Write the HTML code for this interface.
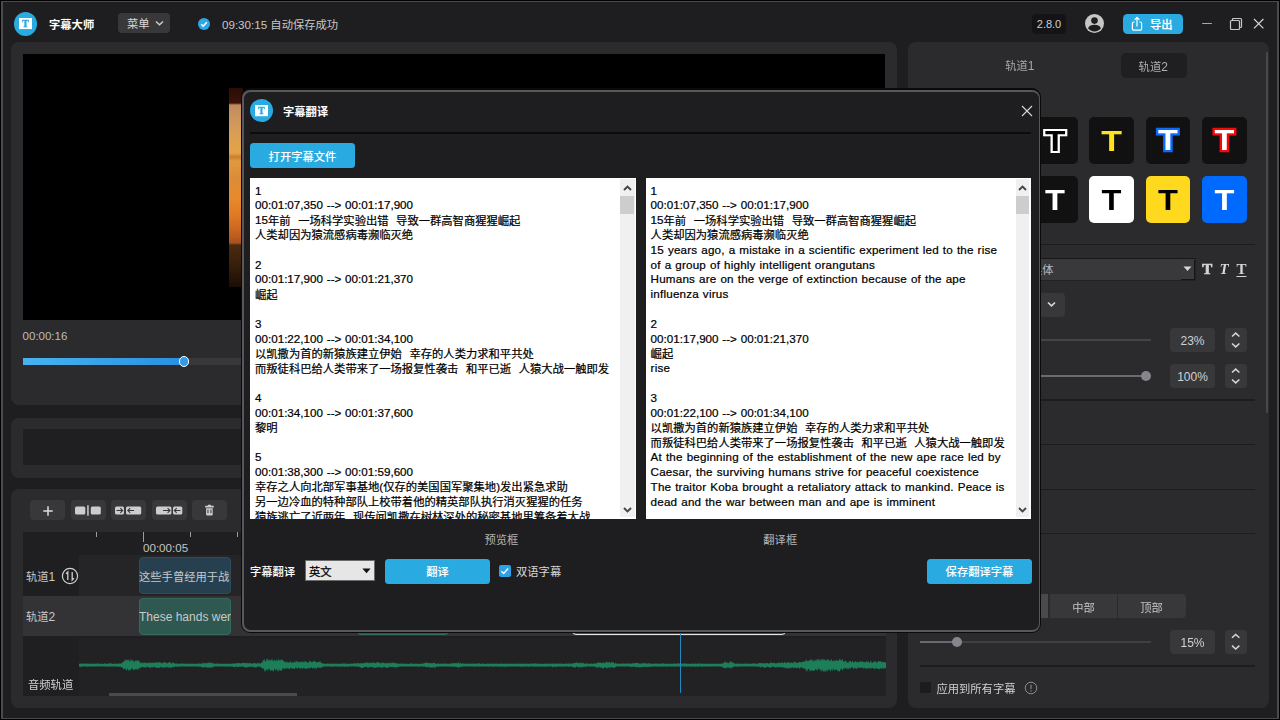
<!DOCTYPE html>
<html lang="zh-CN">
<head>
<meta charset="utf-8">
<title>字幕大师</title>
<style>
*{box-sizing:border-box;margin:0;padding:0}
html,body{width:1280px;height:720px;overflow:hidden;background:#1e1e20}
body{position:relative;font-family:"Liberation Sans","Noto Sans CJK SC",sans-serif;font-size:12px;color:#d0d0d0}
.abs{position:absolute}
#frame{position:absolute;left:0;top:0;width:1280px;height:720px;border:1px solid #000;z-index:50;pointer-events:none}
.fr{background:#4b4b4b;z-index:51}
.panel{position:absolute;background:#2b2b2e;border-radius:8px}
.logo{position:absolute;border-radius:50%;background:#29abe2}
.btn{position:absolute;background:#29abe2;color:#fff;border-radius:3.5px;text-align:center;font-weight:500;font-size:12px}
.tbtn{position:absolute;top:500.2px;height:20px;width:35px;background:#38383b;border-radius:4px}
.txt{position:absolute;white-space:nowrap;margin-top:1px}
.val{position:absolute;width:45px;height:24px;background:#38383b;border-radius:4px;text-align:center;line-height:26.6px;font-size:12px;color:#d0d0d0}
.step{position:absolute;width:22px;height:24px;background:#38383b;border-radius:4px}
.sep{position:absolute;height:1.6px;background:#1d1d1f;margin-top:-.4px}
.tile{position:absolute;width:44.6px;height:46.9px;border-radius:5px;background:#111}
.box{position:absolute;background:#fff;top:178px;height:341px;overflow:hidden;color:#000;font-size:11.65px;line-height:14.82px;white-space:pre;word-spacing:.55px;padding:5.5px 0 0 5px;-webkit-text-stroke:.22px #000}
.sb{position:absolute;top:1.1px;right:1.5px;width:14.2px;bottom:1.6px;background:#f0f0f0}
.c{font-size:11.3px}
.e{letter-spacing:.19px}
.box .c{position:relative;top:.5px}
.thumb{position:absolute;left:0;top:16.9px;width:13.8px;height:17.6px;background:#cdcdcd}
</style>
</head>
<body>
<div id="frame"></div>
<div class="abs fr" style="left:1px;top:1px;width:2px;height:718px"></div>
<div class="abs fr" style="left:1277px;top:1px;width:2px;height:718px"></div>
<div class="abs fr" style="left:1px;top:1px;width:1278px;height:1.3px"></div>
<div class="abs fr" style="left:1px;top:717.6px;width:1278px;height:1.5px"></div>

<!-- ===== Title bar ===== -->
<div class="logo" style="left:13.9px;top:11.6px;width:23.2px;height:24.2px"></div>
<svg class="abs" style="left:18.9px;top:17.1px;will-change:transform" width="13.1" height="13" viewBox="0 0 13.1 13"><rect x="0" y="1" width="13.1" height="11.1" fill="#fff"/><text x="6.55" y="9.9" text-anchor="middle" font-family="'Liberation Serif',serif" font-weight="700" font-size="9.6" fill="#29abe2" stroke="#29abe2" stroke-width=".45">T</text></svg>
<div class="txt" style="left:49px;top:16px;font-weight:bold;color:#fff;font-size:12px;line-height:16px"><span class="c">字幕大师</span></div>
<div class="abs" style="left:118px;top:13px;width:52px;height:20px;background:#38383b;border-radius:4px"></div>
<div class="txt" style="left:127px;top:15px;font-size:12px;line-height:16px;color:#d8d8d8"><span class="c">菜单</span></div>
<svg class="abs" style="left:155.4px;top:19.6px" width="9" height="7" viewBox="0 0 9 7"><path d="M1 1.5l3.5 3.3L8 1.5" fill="none" stroke="#d0d0d0" stroke-width="1.4"/></svg>
<div class="abs" style="left:198.3px;top:17.7px;width:12px;height:12px;border-radius:50%;background:#2ea7e8"></div>
<svg class="abs" style="left:198.3px;top:17.7px" width="12" height="12" viewBox="0 0 12 12"><path d="M3.2 6.2l2 2 3.6-4" fill="none" stroke="#fff" stroke-width="1.5"/></svg>
<div class="txt" style="left:222px;top:16px;font-size:11.6px;line-height:16px;color:#c8c8c8">09:30:15 <span class="c">自动保存成功</span></div>

<div class="abs" style="left:1032px;top:14px;width:34px;height:20px;background:#141416;border-radius:4px;text-align:center;line-height:20px;font-size:11px;color:#d0d0d0">2.8.0</div>
<svg class="abs" style="left:1083.9px;top:13.4px" width="21" height="21" viewBox="0 0 21 21"><circle cx="10.5" cy="10.5" r="9.5" fill="#c6c6c6"/><circle cx="10.5" cy="7.6" r="3.3" fill="#1e1e20"/><path d="M4 15.2c1.2-2.6 3.6-3.4 6.5-3.4s5.3 0.8 6.5 3.4c-1.5 2-3.8 3.2-6.5 3.2s-5-1.2-6.5-3.2z" fill="#1e1e20"/></svg>
<div class="btn" style="left:1123px;top:13.8px;width:60px;height:20px;border-radius:4.5px"></div>
<svg class="abs" style="left:1130px;top:16px" width="14" height="16" viewBox="0 0 14 16"><path d="M4.6 6H3.8a1.4 1.4 0 0 0-1.4 1.4v5.4a1.4 1.4 0 0 0 1.4 1.4h6.4a1.4 1.4 0 0 0 1.4-1.4V7.4a1.4 1.4 0 0 0-1.4-1.4H9.4M7 10.5V1.6M4.6 3.8L7 1.4l2.4 2.4" fill="none" stroke="#fff" stroke-width="1.2"/></svg>
<div class="txt" style="left:1150px;top:16px;font-weight:500;color:#fff;-webkit-text-stroke:.2px #fff;font-size:12px;line-height:16px"><span class="c">导出</span></div>
<div class="abs" style="left:1202px;top:22.7px;width:9.8px;height:1.7px;background:#a8a8a8;border-radius:1px"></div>
<svg class="abs" style="left:1229px;top:17px" width="14" height="14" viewBox="0 0 14 14"><path d="M3.5 3.5V2.5a1 1 0 0 1 1-1h7a1 1 0 0 1 1 1v7a1 1 0 0 1-1 1h-1" fill="none" stroke="#c8c8c8" stroke-width="1.2"/><rect x="1.5" y="3.5" width="9" height="9" rx="1" fill="none" stroke="#c8c8c8" stroke-width="1.2"/></svg>
<svg class="abs" style="left:1252px;top:17px" width="13" height="13" viewBox="0 0 13 13"><path d="M2 2l9.4 9.4M11.4 2l-9.4 9.4" stroke="#d4d4d4" stroke-width="1.2"/></svg>

<!-- ===== Left: video panel ===== -->
<div class="panel" style="left:11.4px;top:42.4px;width:886px;height:363.1px"></div>
<div class="abs" style="left:22.6px;top:54.4px;width:862.9px;height:265.8px;background:#000"></div>
<div class="abs" id="vid" style="left:228.5px;top:88px;width:14px;height:198.5px;background:linear-gradient(180deg,#2a0c06 0,#3a140a 15px,#c08a5c 17px,#cc9560 30px,#dda052 50px,#e5a248 65px,#c88030 69px,#e09a40 73px,#dc8c38 90px,#e88a2e 110px,#e07a24 127px,#cc6820 140px,#b85a22 150px,#a8501e 155px,#4a2a12 157px,#3a200c 175px,#1c0e06 198px)"></div>
<div class="txt" style="left:22.6px;top:328.4px;font-size:11.5px;line-height:14px;color:#bdbdbd">00:00:16</div>
<div class="abs" style="left:23px;top:358px;width:862px;height:7px;background:#38383b"></div>
<div class="abs" style="left:23px;top:358px;width:161px;height:7px;background:linear-gradient(90deg,#47b4ef,#2a8fe0)"></div>
<div class="abs" style="left:178.8px;top:356.3px;width:10.5px;height:10.5px;border-radius:50%;background:#2f9bea;border:1.3px solid #fff"></div>

<!-- second panel -->
<div class="panel" style="left:11.4px;top:417.5px;width:886px;height:60.5px"></div>
<div class="abs" style="left:23px;top:429px;width:862px;height:36px;background:#1f1f21"></div>

<!-- timeline panel -->
<div class="panel" style="left:11.4px;top:489px;width:886px;height:219px"></div>
<div class="tbtn" style="left:30px"></div>
<svg class="abs" style="left:42.5px;top:505.5px" width="10" height="10" viewBox="0 0 10 10"><path d="M5 0.3v9.4M0.3 5h9.4" stroke="#dcdcdc" stroke-width="1.5"/></svg>
<div class="tbtn" style="left:71px"></div>
<svg class="abs" style="left:75px;top:505px" width="27" height="11" viewBox="0 0 27 11"><rect x="0" y="1.6" width="10.3" height="7.8" rx="1.5" fill="#cdcdcd"/><rect x="15.8" y="1.6" width="10" height="7.8" rx="1.5" fill="#cdcdcd"/><rect x="12.2" y="0.3" width="1.5" height="10.4" fill="#cdcdcd"/></svg>
<div class="tbtn" style="left:111px"></div>
<svg class="abs" style="left:115px;top:505px" width="27" height="11" viewBox="0 0 27 11"><rect x="0" y="1.6" width="9" height="7.8" rx="1.5" fill="#cdcdcd"/><rect x="11" y="1.6" width="15.2" height="7.8" rx="1.5" fill="#cdcdcd"/><path d="M1.5 5.5h6M5.3 3.2l2.4 2.3-2.4 2.3M19 5.5h-6M15.2 3.2l-2.4 2.3 2.4 2.3" fill="none" stroke="#38383b" stroke-width="1.1"/></svg>
<div class="tbtn" style="left:152px"></div>
<svg class="abs" style="left:155.8px;top:505px" width="27" height="11" viewBox="0 0 27 11"><rect x="0" y="1.6" width="15.4" height="7.8" rx="1.5" fill="#cdcdcd"/><rect x="17" y="1.6" width="9.3" height="7.8" rx="1.5" fill="#cdcdcd"/><path d="M7 5.5h7M11.6 3.2l2.4 2.3-2.4 2.3M24.5 5.5h-6M20.7 3.2l-2.4 2.3 2.4 2.3" fill="none" stroke="#38383b" stroke-width="1.1"/></svg>
<div class="tbtn" style="left:192px"></div>
<svg class="abs" style="left:204px;top:503px" width="12" height="14" viewBox="204 503 12 14"><rect x="205.1" y="505.8" width="8.7" height="1.6" rx=".5" fill="#cdcdcd"/><rect x="207.8" y="504.7" width="3.2" height="1.4" rx=".5" fill="#cdcdcd"/><path d="M206.1 508.2h6.6v6.2a1 1 0 0 1-1 1h-4.6a1 1 0 0 1-1-1z" fill="#cdcdcd"/><rect x="207.2" y="509.6" width="1.5" height="3.6" fill="#6a6a6e"/><rect x="210.2" y="509.6" width="1.5" height="3.6" fill="#6a6a6e"/></svg>

<!-- ruler + tracks -->
<div class="abs" style="left:22.6px;top:532.2px;width:863px;height:163.5px;background:#1f1f21"></div>
<div class="abs" style="left:96px;top:532.4px;width:1.3px;height:5px;background:#9c9c9c"></div>
<div class="abs" style="left:143px;top:532.4px;width:1.3px;height:9.5px;background:#9c9c9c"></div>
<div class="abs" style="left:190px;top:532.4px;width:1.3px;height:5px;background:#9c9c9c"></div>
<div class="abs" style="left:237px;top:532.4px;width:1.3px;height:5px;background:#9c9c9c"></div>
<div class="txt" style="left:143px;top:540px;font-size:11.6px;line-height:14px;color:#c4c4c4">00:00:05</div>
<!-- track 1 -->
<div class="abs" style="left:78.7px;top:555.2px;width:807px;height:40.8px;background:#252527"></div>
<div class="txt" style="left:26px;top:567.5px;font-size:12px;line-height:16px;color:#c8c8c8"><span class="c">轨道</span>1</div>
<svg class="abs" style="left:61px;top:567px" width="18" height="18" viewBox="0 0 18 18"><circle cx="9" cy="9" r="7.6" fill="none" stroke="#d0d0d0" stroke-width="1.2"/><path d="M6.8 13V5L5 6.8M11.2 5v8L13 11.2" fill="none" stroke="#d0d0d0" stroke-width="1.3"/></svg>
<div class="abs" style="left:138.8px;top:557px;width:92.4px;height:37px;background:#27404f;border:1px solid #2b4d61;border-radius:4px"></div>
<div class="txt" style="left:139px;top:567.5px;width:92px;overflow:hidden;font-size:12px;line-height:16px;color:#c9c9c9;text-align:left"><span class="c">这些手曾经用于战</span></div>
<!-- track 2 -->
<div class="abs" style="left:22.6px;top:596.4px;width:863px;height:39.6px;background:#333336"></div>
<div class="txt" style="left:26px;top:608.4px;font-size:12px;line-height:16px;color:#c8c8c8"><span class="c">轨道</span>2</div>
<div class="abs" style="left:138.8px;top:597.6px;width:92.4px;height:37px;background:#2f5850;border:1px solid #36695e;border-radius:4px"></div>
<div class="txt" style="left:139px;top:608.4px;width:92px;overflow:hidden;font-size:12px;line-height:16px;color:#c9c9c9">These hands wer</div>
<!-- clips under dialog bottom edge -->
<div class="abs" style="left:356.5px;top:597.6px;width:92.4px;height:37px;background:#2f5850;border:1px solid #36695e;border-radius:4px"></div>
<div class="abs" style="left:571.5px;top:597.6px;width:214px;height:37px;background:#2f5850;border:1.6px solid #dfe9e8;border-radius:4px"></div>
<!-- audio -->
<div class="abs" style="left:78.7px;top:637.6px;width:807px;height:58.1px;background:#222224"></div>
<svg class="abs" style="left:0;top:0" width="1280" height="720" viewBox="0 0 1280 720"><path fill="#1c7f59" d="M79 663.7L79.5 663.7L80 663.7L80.5 663.8L81 663.6L81.5 662.9L82 663.8L82.5 663.7L83 663.7L83.5 663.6L84 663.8L84.5 663.6L85 663.6L85.5 663.6L86 663.8L86.5 663.8L87 663.8L87.5 663.6L88 663.8L88.5 663.8L89 663.6L89.5 663.8L90 663.8L90.5 663.6L91 663.8L91.5 663.8L92 663.7L92.5 663.6L93 663.7L93.5 663.6L94 663.9L94.5 663.8L95 663.8L95.5 663.7L96 663.6L96.5 663.7L97 663.7L97.5 663.6L98 662.9L98.5 663.7L99 663.7L99.5 663.8L100 663.7L100.5 663.8L101 663.7L101.5 663.7L102 663.8L102.5 663.7L103 663.7L103.5 663.9L104 663.7L104.5 662.9L105 663.8L105.5 663.7L106 663.8L106.5 663.6L107 663.8L107.5 663.7L108 663.7L108.5 663.7L109 663.6L109.5 662.9L110 663.8L110.5 662.9L111 662.9L111.5 663.7L112 663.7L112.5 663.9L113 663.8L113.5 663.7L114 663.6L114.5 663.8L115 663.8L115.5 663.6L116 663.7L116.5 663.8L117 663.7L117.5 663.6L118 663.7L118.5 663.6L119 663.8L119.5 663.5L120 663.1L120.5 663.9L121 663.7L121.5 663.1L122 662.6L122.5 662.9L123 661.4L123.5 662.6L124 660.2L124.5 660.9L125 660.6L125.5 660L126 658.7L126.5 660.7L127 660.2L127.5 659.7L128 660.2L128.5 658.8L129 661.2L129.5 661.7L130 659.3L130.5 660.5L131 661.5L131.5 658.9L132 659.4L132.5 661.5L133 659.7L133.5 660.9L134 661.8L134.5 661.7L135 661.3L135.5 660.3L136 660.8L136.5 660.3L137 661.4L137.5 660.3L138 660L138.5 660.4L139 661.1L139.5 661.2L140 662.8L140.5 663.3L141 662.1L141.5 663.2L142 663.2L142.5 662.2L143 662.3L143.5 663L144 663.6L144.5 662.5L145 662L145.5 662.8L146 662.8L146.5 663.3L147 663.5L147.5 662.7L148 662.7L148.5 663.3L149 662.2L149.5 662L150 663.6L150.5 662.8L151 663.1L151.5 662.8L152 662.6L152.5 662.4L153 663.3L153.5 662.4L154 663.3L154.5 662.8L155 662.1L155.5 662.4L156 662.6L156.5 662.6L157 661.9L157.5 663.2L158 662.3L158.5 662.2L159 662.1L159.5 662.4L160 662.3L160.5 662.4L161 663.1L161.5 663.6L162 662.5L162.5 663.3L163 662.5L163.5 662.5L164 662.7L164.5 661.9L165 662.4L165.5 661.9L166 662.6L166.5 663.2L167 663.6L167.5 663L168 663.2L168.5 662.7L169 662L169.5 661.9L170 662.2L170.5 662.6L171 663.6L171.5 663.4L172 663.4L172.5 662.6L173 662L173.5 662.9L174 663.3L174.5 663.1L175 663.8L175.5 663.9L176 662.6L176.5 663.8L177 663.6L177.5 663.7L178 663.7L178.5 663.6L179 663.7L179.5 663.7L180 663.7L180.5 663.6L181 663.7L181.5 663.6L182 663.7L182.5 663.6L183 663.6L183.5 663.8L184 663.7L184.5 663.7L185 663.8L185.5 663.8L186 663.6L186.5 663.6L187 663.8L187.5 663.7L188 663.8L188.5 663.7L189 663.8L189.5 663.7L190 663.8L190.5 663.7L191 663.6L191.5 663.8L192 663.8L192.5 663.8L193 663.6L193.5 663.8L194 663.9L194.5 663.6L195 663.7L195.5 663.7L196 663.8L196.5 663.8L197 663.8L197.5 663.7L198 663.6L198.5 663.6L199 663.6L199.5 663.4L200 663.4L200.5 663.7L201 663.7L201.5 663.5L202 663.7L202.5 663.5L203 662.3L203.5 663.6L204 662.6L204.5 663.6L205 663.3L205.5 663.2L206 662.6L206.5 663.3L207 663.4L207.5 663.1L208 662.2L208.5 663.2L209 662.1L209.5 662.7L210 662.8L210.5 663.6L211 662.2L211.5 662.7L212 663.2L212.5 662.7L213 663.9L213.5 663.5L214 663.2L214.5 664.1L215 663.5L215.5 663.7L216 663.8L216.5 663.6L217 663.7L217.5 663.6L218 663.6L218.5 663.6L219 663.8L219.5 663.8L220 663.8L220.5 663.7L221 663.9L221.5 663.7L222 663.6L222.5 663.8L223 663.8L223.5 663.7L224 663.7L224.5 663.8L225 663.8L225.5 663.8L226 663.7L226.5 663.7L227 663.8L227.5 663.8L228 663.7L228.5 663.8L229 663.7L229.5 663.8L230 663.8L230.5 663.6L231 663.8L231.5 663.8L232 663.8L232.5 663.7L233 663.4L233.5 663.3L234 663.2L234.5 663.9L235 663.6L235.5 663.6L236 662.7L236.5 663.1L237 663.9L237.5 662.5L238 663L238.5 663L239 663.4L239.5 662.8L240 663.6L240.5 663.7L241 663.1L241.5 663.2L242 663.1L242.5 663L243 663L243.5 662.6L244 663.3L244.5 663L245 662.8L245.5 663.2L246 662.7L246.5 663.3L247 663.1L247.5 663.2L248 663.3L248.5 663.5L249 662.9L249.5 662.9L250 662.9L250.5 663.1L251 663.8L251.5 663.2L252 663.9L252.5 663.2L253 663.5L253.5 663.6L254 662.6L254.5 663L255 663.3L255.5 663.6L256 663.1L256.5 663.8L257 663.8L257.5 662.6L258 663.6L258.5 663.5L259 662.6L259.5 663.4L260 663.1L260.5 663.9L261 663.5L261.5 662L262 662.4L262.5 662.4L263 660.3L263.5 659.9L264 660.6L264.5 658.6L265 661.2L265.5 661.2L266 661.8L266.5 659.2L267 658.5L267.5 659.2L268 659.3L268.5 660.2L269 661.1L269.5 659.2L270 661.3L270.5 659.4L271 660.5L271.5 658.5L272 661.1L272.5 658.4L273 660.9L273.5 661.6L274 660.3L274.5 659.9L275 659.6L275.5 661L276 661.6L276.5 659L277 660.9L277.5 661.2L278 658.1L278.5 660.2L279 660.5L279.5 660L280 659.8L280.5 660.6L281 658.9L281.5 660.3L282 659.9L282.5 659.3L283 660.2L283.5 661L284 661.7L284.5 661L285 662.4L285.5 662.5L286 661.8L286.5 661.5L287 661.6L287.5 662.6L288 663L288.5 661.9L289 662.4L289.5 662.8L290 661.6L290.5 661L291 662.7L291.5 662.9L292 661.5L292.5 662.4L293 662.8L293.5 662.6L294 662.6L294.5 660.9L295 662.9L295.5 662.1L296 660.6L296.5 661.8L297 660.5L297.5 661.9L298 662.9L298.5 660.8L299 662L299.5 662L300 662.9L300.5 661.1L301 662.4L301.5 661.6L302 661.9L302.5 662.1L303 660.5L303.5 662.9L304 661.4L304.5 662.2L305 660.8L305.5 660.8L306 662L306.5 662.1L307 662.5L307.5 662.6L308 662.6L308.5 662.5L309 662.2L309.5 660.5L310 660.8L310.5 662.1L311 661.3L311.5 662.3L312 662.6L312.5 662L313 661.2L313.5 662.1L314 660.7L314.5 661.1L315 660.7L315.5 662.2L316 662.8L316.5 662.2L317 661.7L317.5 662L318 662.9L318.5 661.5L319 662.2L319.5 661.7L320 661.2L320.5 661.6L321 663.1L321.5 663.1L322 663.2L322.5 662.9L323 663.4L323.5 663.9L324 663.6L324.5 663.8L325 663.6L325.5 663.7L326 663.8L326.5 663.8L327 663.8L327.5 663.8L328 662.9L328.5 663.8L329 663.7L329.5 663.9L330 663.8L330.5 663.7L331 663.6L331.5 663.7L332 663.6L332.5 663.8L333 663.6L333.5 663.7L334 663.8L334.5 663.7L335 663.6L335.5 663.8L336 663.6L336.5 663.7L337 663.7L337.5 663.8L338 663.8L338.5 663.8L339 663.8L339.5 663.8L340 663.7L340.5 663.8L341 663.7L341.5 663.6L342 663.7L342.5 663.7L343 663.7L343.5 663.6L344 662.9L344.5 663.6L345 663.7L345.5 663.6L346 663.7L346.5 663.7L347 663.8L347.5 663.7L348 663.7L348.5 663.8L349 663.9L349.5 663.8L350 663.8L350.5 663.6L351 663.7L351.5 663.6L352 663.7L352.5 663.8L353 663.8L353.5 662.9L354 663.6L354.5 663.6L355 663.6L355.5 662.9L356 663.8L356.5 663.6L357 663.1L357.5 663.3L358 663.1L358.5 663L359 663.7L359.5 663.2L360 663.7L360.5 663.1L361 662.9L361.5 663.4L362 663.2L362.5 663.6L363 663L363.5 663.4L364 662.6L364.5 663.3L365 662.2L365.5 663.4L366 662.1L366.5 662.7L367 662.7L367.5 662.7L368 662.3L368.5 662.9L369 663.6L369.5 662.6L370 662.7L370.5 663.1L371 662.8L371.5 662.9L372 662.7L372.5 662.8L373 662.2L373.5 663L374 662.5L374.5 662.5L375 663.1L375.5 663.5L376 662.9L376.5 662.4L377 662.2L377.5 662.4L378 662.1L378.5 662.3L379 663.3L379.5 663L380 662.3L380.5 663.3L381 663.6L381.5 662.5L382 663.4L382.5 662.3L383 662.8L383.5 662.4L384 663.1L384.5 663.7L385 662.3L385.5 663.6L386 663.1L386.5 662.7L387 663.6L387.5 663.4L388 662.3L388.5 663.4L389 663L389.5 663.2L390 662.7L390.5 662.8L391 663.5L391.5 662.6L392 663.5L392.5 662.2L393 663.2L393.5 662.1L394 662.5L394.5 663.2L395 663.5L395.5 663L396 663.1L396.5 663.1L397 663.5L397.5 663.7L398 663.8L398.5 663.4L399 663.4L399.5 663.7L400 663.7L400.5 663.7L401 663.6L401.5 663.6L402 663.8L402.5 663.8L403 663.6L403.5 663.7L404 663.7L404.5 663.6L405 663.7L405.5 663.8L406 663.8L406.5 663.7L407 663.7L407.5 663.7L408 663.9L408.5 663.9L409 663.8L409.5 663.8L410 663.7L410.5 662.9L411 663.7L411.5 663.6L412 663.7L412.5 662.9L413 663.7L413.5 663.9L414 663.7L414.5 663.8L415 663.8L415.5 663.6L416 663.8L416.5 663.8L417 663.7L417.5 663.8L418 663.8L418.5 663.7L419 663.9L419.5 663.7L420 663.8L420.5 663.8L421 663.9L421.5 663.6L422 663.8L422.5 663.6L423 663.6L423.5 663.7L424 662.3L424.5 663.5L425 663.1L425.5 663L426 662.4L426.5 662.5L427 662.5L427.5 663L428 663.6L428.5 662.5L429 663.6L429.5 662.7L430 663.6L430.5 663.2L431 662.8L431.5 663.4L432 662.9L432.5 663.5L433 663L433.5 663L434 662.6L434.5 662.9L435 663.1L435.5 663.7L436 663.7L436.5 663.8L437 664L437.5 663.3L438 663.4L438.5 663.6L439 663.8L439.5 663.8L440 663.7L440.5 663.6L441 663.6L441.5 663.9L442 663.8L442.5 663.6L443 663.8L443.5 663.6L444 663.7L444.5 663.8L445 662.9L445.5 663.8L446 663.8L446.5 663.6L447 663.7L447.5 663.7L448 663.9L448.5 663.8L449 663.6L449.5 663.8L450 663.7L450.5 663.5L451 663.3L451.5 664.2L452 663L452.5 663L453 663.3L453.5 663.2L454 663.2L454.5 663.2L455 662.9L455.5 663.2L456 663.2L456.5 662.5L457 663.7L457.5 663.5L458 662.6L458.5 662.6L459 662.7L459.5 663.9L460 663.1L460.5 663.2L461 662.9L461.5 663.6L462 664.2L462.5 663.3L463 663.5L463.5 663.6L464 663.6L464.5 663.8L465 663.8L465.5 663.7L466 663.8L466.5 663.6L467 663.8L467.5 663.8L468 663.7L468.5 663.8L469 663.7L469.5 663.6L470 663.6L470.5 663.8L471 663.7L471.5 663.8L472 663.8L472.5 663.8L473 663.6L473.5 663.6L474 663.8L474.5 663.8L475 663.8L475.5 663.7L476 663.6L476.5 663.8L477 663.8L477.5 663.6L478 663.6L478.5 662.9L479 663.9L479.5 662.9L480 663.7L480.5 663.9L481 663.7L481.5 663.8L482 663.7L482.5 663.6L483 663.6L483.5 663.8L484 663.7L484.5 663.8L485 663.7L485.5 663.9L486 663.7L486.5 663.7L487 663.7L487.5 663.6L488 663.7L488.5 663.7L489 663.7L489.5 663.6L490 663.7L490.5 663.6L491 663.8L491.5 663.8L492 663.6L492.5 663.8L493 663.8L493.5 663.7L494 663.6L494.5 663.7L495 663.8L495.5 663.6L496 663.7L496.5 663.8L497 663.8L497.5 663.6L498 663.8L498.5 663.9L499 663.7L499.5 663.8L500 663.8L500.5 663.7L501 663.6L501.5 663.6L502 663.6L502.5 663.7L503 663.8L503.5 663.7L504 663.7L504.5 663.7L505 663.8L505.5 663.8L506 663.8L506.5 663.9L507 662.9L507.5 663.7L508 663.7L508.5 663.8L509 663.7L509.5 663.8L510 663.8L510.5 663.7L511 663.7L511.5 663.8L512 663.8L512.5 663.7L513 663.7L513.5 663.7L514 663.9L514.5 663.7L515 663.8L515.5 663.6L516 663.7L516.5 663.8L517 663.6L517.5 663.7L518 663.7L518.5 663.6L519 663.7L519.5 663.7L520 663.8L520.5 663.7L521 663.8L521.5 663.8L522 663.6L522.5 663.8L523 663.8L523.5 663.6L524 663.7L524.5 663.7L525 663.7L525.5 663.8L526 663.8L526.5 663.6L527 663.7L527.5 663.8L528 663.9L528.5 663.7L529 663.8L529.5 663.8L530 663.8L530.5 663.8L531 663.8L531.5 662.9L532 663.8L532.5 663.7L533 663.7L533.5 663.7L534 663.7L534.5 662.9L535 663.6L535.5 663.6L536 663.7L536.5 663.6L537 663.8L537.5 663.7L538 663.6L538.5 663.8L539 663.7L539.5 663.7L540 663.6L540.5 663.7L541 663.9L541.5 663.8L542 663.7L542.5 663.6L543 663.9L543.5 663.9L544 663.8L544.5 663.7L545 663.7L545.5 663.7L546 663.8L546.5 663.8L547 663.6L547.5 663.7L548 663.9L548.5 662.9L549 663.8L549.5 663.8L550 663.7L550.5 663.8L551 663.7L551.5 663.6L552 663.8L552.5 663.6L553 663.6L553.5 663.8L554 663.8L554.5 663.7L555 663.7L555.5 663.7L556 663.6L556.5 663.6L557 663.8L557.5 663.8L558 663.7L558.5 663.6L559 663.7L559.5 663.6L560 663.6L560.5 663.8L561 663.6L561.5 663.8L562 663.6L562.5 663.7L563 663.7L563.5 663.9L564 663.7L564.5 663.7L565 663.7L565.5 663.7L566 663.6L566.5 662.9L567 663.7L567.5 663.9L568 663.6L568.5 663.8L569 662.9L569.5 663.7L570 663.8L570.5 663.6L571 663.7L571.5 663.5L572 663.4L572.5 664.1L573 663.3L573.5 662.6L574 663.4L574.5 662.9L575 663.1L575.5 663L576 663L576.5 662.1L577 663.1L577.5 662.6L578 663.5L578.5 662.8L579 663L579.5 663.1L580 663.4L580.5 662.3L581 663.5L581.5 662.3L582 663.6L582.5 663.4L583 662.8L583.5 662.4L584 663.7L584.5 663.9L585 663.4L585.5 663.2L586 663.5L586.5 663.8L587 663.6L587.5 663.6L588 663.8L588.5 663.8L589 663.7L589.5 663.7L590 663.8L590.5 663.7L591 663.6L591.5 663.7L592 663.6L592.5 663.8L593 663.8L593.5 663.7L594 663.8L594.5 663.3L595 664L595.5 662.9L596 663.5L596.5 663.4L597 663L597.5 663.1L598 662.6L598.5 662L599 662.2L599.5 662.8L600 663.2L600.5 661.9L601 663.5L601.5 662.3L602 663.4L602.5 662.8L603 662.8L603.5 661.8L604 663.2L604.5 663.3L605 663.3L605.5 662.7L606 661.5L606.5 661.7L607 662L607.5 662.5L608 662.2L608.5 662.4L609 662.5L609.5 662.1L610 661.9L610.5 663.3L611 663.4L611.5 661.6L612 662.6L612.5 662.4L613 661.9L613.5 661.8L614 663.5L614.5 663.4L615 663.6L615.5 662.8L616 663.2L616.5 663.6L617 663.4L617.5 663.8L618 663.9L618.5 663.8L619 663.6L619.5 663.8L620 663.6L620.5 663.8L621 663.7L621.5 663.7L622 663.7L622.5 662.9L623 663.6L623.5 663.8L624 663.6L624.5 663.9L625 663.6L625.5 663.6L626 663.8L626.5 663.6L627 663.6L627.5 663.6L628 663.6L628.5 663.6L629 663.8L629.5 663.6L630 663.8L630.5 663.7L631 662.9L631.5 663.7L632 663.8L632.5 662.7L633 663.4L633.5 663.4L634 663.6L634.5 663.1L635 662.9L635.5 662.7L636 663L636.5 663.2L637 663.2L637.5 662.7L638 662.9L638.5 663.1L639 663.9L639.5 663.4L640 663.7L640.5 663.7L641 663.2L641.5 663.5L642 663.9L642.5 662.9L643 662.8L643.5 663.8L644 662.9L644.5 662.6L645 663.9L645.5 663.4L646 662.7L646.5 663.8L647 663.5L647.5 663.8L648 663.3L648.5 663.4L649 662.9L649.5 663.1L650 664L650.5 663.4L651 663.4L651.5 663.8L652 663.8L652.5 663.8L653 663.7L653.5 663.7L654 663.8L654.5 663.8L655 663.6L655.5 663.7L656 662.9L656.5 663.7L657 663.7L657.5 663.7L658 663.6L658.5 663.7L659 663.8L659.5 663.7L660 663.9L660.5 663.7L661 662.9L661.5 663.7L662 663.6L662.5 663.7L663 662.9L663.5 663.6L664 663.6L664.5 663.9L665 663.8L665.5 663.8L666 663.7L666.5 663.8L667 663.8L667.5 663.7L668 663.8L668.5 663.7L669 663.9L669.5 663.6L670 663.7L670.5 663.7L671 663.8L671.5 663.8L672 663.6L672.5 663.8L673 663.8L673.5 663.7L674 663.8L674.5 662.9L675 663.7L675.5 663.7L676 663.7L676.5 663.8L677 663.8L677.5 663.6L678 662.9L678.5 663.6L679 662.9L679.5 663.8L680 663.7L680.5 662.9L681 663.7L681.5 663.8L682 662.9L682.5 663.8L683 663.8L683.5 663.7L684 662.9L684.5 663.8L685 662.9L685.5 663.7L686 663.8L686.5 663.8L687 663.8L687.5 663.8L688 663.6L688.5 663.8L689 663.8L689.5 663.7L690 663.8L690.5 663.9L691 663.7L691.5 663.6L692 663.6L692.5 663.7L693 663.6L693.5 663.8L694 663.8L694.5 663.8L695 663.6L695.5 663.6L696 663.7L696.5 663.7L697 663.6L697.5 663.6L698 663.9L698.5 663.6L699 663.7L699.5 662.9L700 663.6L700.5 663.8L701 663.8L701.5 663.8L702 663.8L702.5 663.7L703 663.7L703.5 663.8L704 663.6L704.5 663.7L705 663.8L705.5 663.7L706 663.9L706.5 663.7L707 663.7L707.5 663.8L708 663.8L708.5 663.8L709 663.8L709.5 663.7L710 663.7L710.5 663.7L711 663.7L711.5 663.6L712 663.7L712.5 663.6L713 663.8L713.5 663.7L714 663.7L714.5 663.7L715 663.7L715.5 663.8L716 663.6L716.5 663.7L717 663.9L717.5 663.7L718 663.7L718.5 663.7L719 663.8L719.5 663.7L720 663.7L720.5 663.7L721 663.7L721.5 663.5L722 663.8L722.5 663.3L723 663.4L723.5 663.2L724 662.6L724.5 662L725 662.1L725.5 661.2L726 663.1L726.5 663.3L727 661.5L727.5 663.2L728 662.2L728.5 663.3L729 663.3L729.5 662.6L730 661.2L730.5 661.4L731 661.3L731.5 662.8L732 662.2L732.5 661.6L733 663.3L733.5 662.5L734 663.1L734.5 663.8L735 663.4L735.5 663.7L736 663.6L736.5 663.8L737 663.8L737.5 663.6L738 663.6L738.5 663.7L739 663.6L739.5 663.8L740 663.7L740.5 663.6L741 663.7L741.5 663.7L742 663.9L742.5 663.7L743 663.7L743.5 663.6L744 663.8L744.5 663.7L745 663.8L745.5 663.6L746 662.9L746.5 663.8L747 663.7L747.5 663.8L748 663.7L748.5 663.7L749 663.6L749.5 663.7L750 663.7L750.5 663.7L751 663.7L751.5 663.7L752 663.6L752.5 663.7L753 663.6L753.5 662.9L754 663.6L754.5 663.6L755 663.8L755.5 663.6L756 663.8L756.5 663.8L757 663.9L757.5 663.6L758 663.2L758.5 663.5L759 663.3L759.5 662.8L760 663.6L760.5 662.9L761 663L761.5 663.1L762 663.3L762.5 663.6L763 663.7L763.5 663L764 663.2L764.5 662.9L765 663.4L765.5 663.3L766 663.5L766.5 662.8L767 662.7L767.5 663.2L768 663.3L768.5 663.6L769 663.7L769.5 663.3L770 663.2L770.5 662.5L771 662.5L771.5 662.4L772 662.9L772.5 663.3L773 662.9L773.5 662.7L774 663.2L774.5 662.5L775 663.6L775.5 663.5L776 663.2L776.5 663.1L777 663.4L777.5 663.3L778 663L778.5 662.3L779 663.2L779.5 662.8L780 662.3L780.5 663.4L781 662.8L781.5 662.8L782 663.3L782.5 661.8L783 663.2L783.5 663.2L784 662.4L784.5 661.7L785 662.3L785.5 663.3L786 662.6L786.5 663.2L787 662.3L787.5 663.2L788 661.4L788.5 662.3L789 662.1L789.5 663L790 662.5L790.5 663.3L791 663.2L791.5 662.4L792 661.8L792.5 662.8L793 663.4L793.5 663.3L794 661.6L794.5 661.4L795 662L795.5 662.5L796 662.5L796.5 662.7L797 663L797.5 662.5L798 663.3L798.5 661.9L799 662.4L799.5 662.1L800 661.8L800.5 662.6L801 661.8L801.5 662.4L802 662.2L802.5 661.6L803 661.9L803.5 661.6L804 661.4L804.5 661.3L805 662L805.5 659.7L806 662L806.5 658.8L807 661.3L807.5 661.2L808 660.2L808.5 660.9L809 661.3L809.5 659.5L810 661L810.5 660.3L811 658.4L811.5 660.2L812 659.1L812.5 661.7L813 659.1L813.5 661.5L814 661.3L814.5 659.6L815 661.7L815.5 659.1L816 661.8L816.5 658.7L817 661.1L817.5 658.7L818 659.3L818.5 659.1L819 661.3L819.5 658.3L820 661.3L820.5 659L821 661.7L821.5 658.2L822 659.8L822.5 659.1L823 658.7L823.5 660L824 660.2L824.5 659.5L825 659.7L825.5 660.9L826 658.6L826.5 661.8L827 659.6L827.5 659.8L828 659L828.5 659.4L829 661.1L829.5 660.6L830 659.8L830.5 661.7L831 659L831.5 658.9L832 660.9L832.5 660.8L833 661.2L833.5 660.2L834 661.8L834.5 659.6L835 661.7L835.5 659.9L836 661.1L836.5 660.1L837 659.7L837.5 660.9L838 661L838.5 661.2L839 659.1L839.5 659.9L840 658.2L840.5 660.6L841 659.5L841.5 661.3L842 659.4L842.5 658.7L843 660.4L843.5 661.4L844 662.2L844.5 661.9L845 660.2L845.5 661.1L846 660.6L846.5 661.8L847 663L847.5 662.2L848 662.8L848.5 662.8L849 660.6L849.5 661.7L850 661.1L850.5 661.1L851 661.6L851.5 662.7L852 661.9L852.5 660.6L853 661.1L853.5 662.8L854 662.5L854.5 661.6L855 662.1L855.5 661.3L856 661.5L856.5 662.8L857 662.1L857.5 661.5L858 661.9L858.5 661.7L859 662.7L859.5 661.7L860 661.6L860.5 661.3L861 660.9L861.5 662.6L862 661.4L862.5 660.7L863 662L863.5 661.9L864 662.6L864.5 661.6L865 662.7L865.5 661.5L866 663L866.5 660.8L867 660.9L867.5 662.2L868 661.5L868.5 661.6L869 662.4L869.5 662.9L870 662.8L870.5 660.6L871 660.6L871.5 663L872 662.1L872.5 662.9L873 663L873.5 661.8L874 660.7L874.5 661.8L875 662.1L875.5 661.1L876 661.2L876.5 662.6L877 662.7L877.5 662.4L878 661L878.5 660.7L879 661.3L879.5 661.3L880 661.5L880.5 661.6L881 660.6L881.5 662.5L882 662.2L882.5 661.4L883 662.5L883.5 662L884 661.8L884.5 661.7L885 663.1L885.5 662L886 662.4L886 667.8L885.5 668.2L885 668.3L884.5 669.1L884 667.5L883.5 668.9L883 668.7L882.5 667.2L882 669L881.5 668.4L881 667.9L880.5 668.5L880 668.8L879.5 669.5L879 669L878.5 669L878 668.7L877.5 668.4L877 669L876.5 668.2L876 668.1L875.5 668.1L875 669.1L874.5 669.2L874 669.4L873.5 667.8L873 668.3L872.5 667.8L872 668L871.5 668.1L871 668.7L870.5 667.5L870 669.4L869.5 668.6L869 667.4L868.5 667.8L868 668.8L867.5 668.7L867 667.7L866.5 669.2L866 668.9L865.5 667.8L865 667.7L864.5 668.8L864 667.6L863.5 669.6L863 667.4L862.5 667.7L862 667.4L861.5 667.9L861 668.3L860.5 667.3L860 668L859.5 667.7L859 668.5L858.5 667.3L858 667.2L857.5 667.7L857 669.5L856.5 668.2L856 669.2L855.5 668.1L855 667.5L854.5 668.2L854 668.7L853.5 669.5L853 667.5L852.5 667.3L852 667.9L851.5 667.4L851 667.6L850.5 668.8L850 668.5L849.5 667.4L849 669.5L848.5 669.2L848 667.4L847.5 668.9L847 669.5L846.5 668.8L846 667.4L845.5 668.3L845 668.4L844.5 667.5L844 670.3L843.5 668L843 669.1L842.5 671L842 669.7L841.5 668.6L841 668.7L840.5 669.3L840 671.3L839.5 671.8L839 671.3L838.5 670.5L838 671.1L837.5 670.6L837 670.8L836.5 669.7L836 668.8L835.5 669.4L835 670.4L834.5 670.3L834 670.6L833.5 668.4L833 668.3L832.5 671.4L832 670L831.5 668.5L831 671.5L830.5 671.3L830 669.5L829.5 671.1L829 669.3L828.5 669.9L828 668.9L827.5 671L827 671.9L826.5 670.6L826 669.6L825.5 671.7L825 671.9L824.5 671.3L824 670L823.5 672L823 671.2L822.5 670.8L822 668.6L821.5 671.7L821 671.5L820.5 669.3L820 671.1L819.5 668.4L819 669.5L818.5 668.3L818 669L817.5 671.5L817 668.6L816.5 670.7L816 669.8L815.5 668.7L815 669.7L814.5 670.7L814 671.3L813.5 671.1L813 670.6L812.5 671.1L812 669.4L811.5 671.1L811 670.7L810.5 670L810 671.9L809.5 670.8L809 668.4L808.5 669L808 668.9L807.5 670.2L807 671.9L806.5 670.8L806 670.3L805.5 669.6L805 668.2L804.5 668.6L804 668.5L803.5 669.2L803 667L802.5 667.9L802 668.3L801.5 667.4L801 666.9L800.5 667.6L800 668.8L799.5 668.3L799 668.9L798.5 667.2L798 667.3L797.5 667.9L797 667.8L796.5 668.2L796 668.2L795.5 668.1L795 667L794.5 667.9L794 667.9L793.5 668.8L793 666.9L792.5 667.6L792 667.9L791.5 667.4L791 668.4L790.5 667.4L790 668.2L789.5 668.2L789 667.8L788.5 668.3L788 668.9L787.5 668.8L787 667.1L786.5 667.7L786 668.5L785.5 668.5L785 667.6L784.5 667.9L784 667.4L783.5 667.1L783 668.3L782.5 667.1L782 667.9L781.5 667L781 667.1L780.5 667L780 666.8L779.5 667.8L779 667.7L778.5 666.6L778 667.4L777.5 666.7L777 667.8L776.5 666.8L776 667.8L775.5 667.3L775 667.4L774.5 667.3L774 667.1L773.5 666.5L773 666.4L772.5 666.9L772 666.5L771.5 667L771 667.8L770.5 667.4L770 667.9L769.5 667.5L769 667.6L768.5 667L768 666.9L767.5 666.9L767 666.6L766.5 666.6L766 667.8L765.5 667.7L765 667.7L764.5 667.4L764 667.7L763.5 667.5L763 666.4L762.5 666.7L762 667.3L761.5 667.1L761 666.8L760.5 667.7L760 667.4L759.5 666.8L759 666.2L758.5 667.1L758 666.8L757.5 666.7L757 666.5L756.5 666.4L756 666.5L755.5 666.4L755 666.6L754.5 666.3L754 666.6L753.5 666.4L753 666.5L752.5 666.5L752 666.5L751.5 666.5L751 666.4L750.5 666.4L750 666.5L749.5 666.4L749 666.6L748.5 666.6L748 666.5L747.5 666.4L747 666.5L746.5 666.6L746 666.6L745.5 666.3L745 666.3L744.5 666.5L744 666.6L743.5 666.4L743 666.5L742.5 666.4L742 666.5L741.5 666.4L741 666.5L740.5 666.4L740 666.6L739.5 666.4L739 666.4L738.5 666.6L738 666.5L737.5 666.4L737 666.4L736.5 667.3L736 666.5L735.5 666.6L735 666.7L734.5 666.3L734 666.4L733.5 666.8L733 667.5L732.5 667.7L732 667.1L731.5 667.7L731 668.4L730.5 668.2L730 668.3L729.5 668L729 667L728.5 667.3L728 668.8L727.5 667.3L727 667.5L726.5 667L726 669.1L725.5 668.5L725 668.1L724.5 668.1L724 667.5L723.5 668.1L723 667.8L722.5 667.2L722 666.9L721.5 666.8L721 666.6L720.5 666.5L720 666.4L719.5 666.3L719 666.5L718.5 666.6L718 666.4L717.5 666.4L717 666.6L716.5 666.4L716 666.5L715.5 666.4L715 666.6L714.5 666.4L714 666.5L713.5 666.6L713 666.3L712.5 666.6L712 666.4L711.5 666.4L711 666.5L710.5 666.4L710 666.5L709.5 666.5L709 666.4L708.5 666.4L708 666.5L707.5 666.6L707 666.5L706.5 666.5L706 666.5L705.5 666.5L705 666.5L704.5 666.5L704 666.6L703.5 666.4L703 666.4L702.5 667.3L702 666.5L701.5 666.5L701 666.4L700.5 666.6L700 666.3L699.5 666.3L699 666.6L698.5 667.3L698 666.5L697.5 666.5L697 666.4L696.5 666.6L696 666.4L695.5 666.5L695 667.3L694.5 666.6L694 666.4L693.5 666.6L693 666.4L692.5 666.6L692 666.6L691.5 667.3L691 666.6L690.5 666.5L690 666.4L689.5 666.6L689 666.4L688.5 666.5L688 666.3L687.5 666.4L687 666.6L686.5 667.3L686 666.4L685.5 666.5L685 666.5L684.5 666.4L684 666.5L683.5 666.5L683 666.4L682.5 666.3L682 666.4L681.5 666.6L681 666.5L680.5 666.5L680 666.3L679.5 666.4L679 666.5L678.5 666.4L678 666.5L677.5 666.5L677 666.3L676.5 666.4L676 666.5L675.5 666.4L675 666.5L674.5 667.3L674 666.6L673.5 666.3L673 666.6L672.5 666.4L672 666.6L671.5 666.4L671 666.4L670.5 666.6L670 666.4L669.5 666.4L669 666.5L668.5 666.6L668 666.6L667.5 666.5L667 666.4L666.5 667.3L666 666.4L665.5 666.4L665 666.5L664.5 666.4L664 666.6L663.5 666.6L663 666.6L662.5 666.6L662 667.3L661.5 666.6L661 666.5L660.5 666.4L660 666.5L659.5 666.6L659 666.4L658.5 667.3L658 666.4L657.5 666.6L657 666.5L656.5 666.6L656 666.4L655.5 666.5L655 666.6L654.5 666.6L654 666.4L653.5 666.5L653 666.5L652.5 666.6L652 666.6L651.5 667.3L651 666.5L650.5 666.8L650 666.2L649.5 667L649 667.3L648.5 667L648 666.9L647.5 666.7L647 667.2L646.5 666.9L646 667.6L645.5 666.4L645 667L644.5 667L644 666.4L643.5 667.3L643 666.7L642.5 667.5L642 666.6L641.5 667.5L641 667.3L640.5 667.3L640 667.1L639.5 667.6L639 666.9L638.5 667.6L638 667.2L637.5 666.3L637 667.4L636.5 667.1L636 666.9L635.5 667.3L635 667.3L634.5 666.8L634 666.4L633.5 666.6L633 666.6L632.5 666.8L632 667.3L631.5 667.3L631 666.5L630.5 666.4L630 667.3L629.5 666.4L629 666.6L628.5 666.3L628 666.4L627.5 666.4L627 666.6L626.5 666.5L626 666.6L625.5 666.4L625 666.4L624.5 666.4L624 666.4L623.5 666.4L623 666.3L622.5 666.4L622 666.3L621.5 666.5L621 666.5L620.5 666.5L620 666.4L619.5 666.4L619 666.6L618.5 666.6L618 666.6L617.5 666.5L617 666.8L616.5 666.3L616 666.7L615.5 667.2L615 666.9L614.5 668.2L614 667.8L613.5 668.3L613 667.4L612.5 667.3L612 667.6L611.5 667.3L611 667L610.5 667L610 668.4L609.5 667.8L609 668.1L608.5 667.5L608 667L607.5 668.3L607 668L606.5 668.6L606 667.9L605.5 667L605 666.9L604.5 667.8L604 668.3L603.5 667.9L603 668.5L602.5 668.6L602 667.6L601.5 667.4L601 667.6L600.5 667.9L600 666.9L599.5 667.1L599 668.3L598.5 666.8L598 667.3L597.5 667.3L597 667.4L596.5 667.9L596 667.4L595.5 666.3L595 666.8L594.5 666.7L594 666.4L593.5 666.4L593 666.6L592.5 666.4L592 666.5L591.5 666.6L591 666.4L590.5 666.4L590 666.6L589.5 666.5L589 666.4L588.5 666.4L588 666.6L587.5 666.3L587 666.4L586.5 666.4L586 666.6L585.5 667.9L585 666.6L584.5 666.2L584 667.3L583.5 666.9L583 666.5L582.5 667.2L582 667.6L581.5 667.7L581 666.7L580.5 667.2L580 666.5L579.5 667.9L579 666.9L578.5 667.7L578 667.1L577.5 666.7L577 666.6L576.5 666.5L576 667L575.5 667.1L575 668L574.5 667.8L574 667L573.5 667.4L573 667L572.5 666.2L572 666.9L571.5 666.5L571 666.4L570.5 666.5L570 666.5L569.5 666.5L569 666.4L568.5 667.3L568 666.5L567.5 666.3L567 666.5L566.5 666.5L566 666.4L565.5 666.5L565 666.4L564.5 666.6L564 666.5L563.5 666.4L563 667.3L562.5 666.6L562 666.4L561.5 666.4L561 666.5L560.5 666.5L560 666.5L559.5 666.5L559 666.4L558.5 666.4L558 666.4L557.5 666.6L557 667.3L556.5 666.4L556 666.4L555.5 667.3L555 667.3L554.5 666.4L554 666.4L553.5 666.4L553 667.3L552.5 667.3L552 667.3L551.5 666.3L551 666.5L550.5 666.3L550 666.4L549.5 666.5L549 666.5L548.5 666.6L548 666.4L547.5 666.5L547 666.6L546.5 666.4L546 666.6L545.5 666.5L545 666.6L544.5 667.3L544 666.6L543.5 666.5L543 666.4L542.5 667.3L542 666.5L541.5 666.4L541 666.5L540.5 666.5L540 666.4L539.5 666.4L539 666.5L538.5 666.5L538 667.3L537.5 666.6L537 666.6L536.5 666.6L536 666.4L535.5 666.5L535 666.4L534.5 667.3L534 666.6L533.5 666.5L533 666.5L532.5 666.6L532 666.6L531.5 666.4L531 666.4L530.5 666.4L530 666.5L529.5 666.3L529 666.5L528.5 667.3L528 666.4L527.5 666.4L527 666.6L526.5 666.4L526 666.5L525.5 666.4L525 666.6L524.5 666.5L524 666.6L523.5 666.4L523 667.3L522.5 666.6L522 666.4L521.5 666.4L521 667.3L520.5 666.6L520 666.4L519.5 666.5L519 666.5L518.5 666.4L518 666.4L517.5 666.4L517 666.6L516.5 666.5L516 666.5L515.5 666.4L515 666.3L514.5 666.4L514 666.6L513.5 666.4L513 666.4L512.5 666.5L512 666.5L511.5 666.6L511 666.6L510.5 666.4L510 666.5L509.5 666.5L509 666.4L508.5 666.4L508 666.4L507.5 666.6L507 666.4L506.5 667.3L506 666.5L505.5 666.5L505 666.5L504.5 667.3L504 666.5L503.5 666.6L503 666.4L502.5 667.3L502 666.5L501.5 666.5L501 666.5L500.5 666.4L500 666.6L499.5 667.3L499 666.4L498.5 666.5L498 666.5L497.5 666.6L497 666.6L496.5 666.5L496 666.4L495.5 666.5L495 666.3L494.5 666.5L494 666.6L493.5 667.3L493 666.6L492.5 666.6L492 666.4L491.5 666.5L491 666.3L490.5 666.6L490 666.5L489.5 666.6L489 666.4L488.5 666.4L488 666.5L487.5 666.4L487 666.6L486.5 666.6L486 666.4L485.5 666.4L485 666.5L484.5 666.4L484 666.6L483.5 666.5L483 666.5L482.5 666.6L482 666.5L481.5 666.6L481 666.5L480.5 666.3L480 666.5L479.5 666.4L479 666.4L478.5 666.6L478 666.4L477.5 666.5L477 666.5L476.5 666.6L476 666.4L475.5 666.6L475 666.4L474.5 667.3L474 666.4L473.5 666.6L473 666.4L472.5 666.4L472 666.6L471.5 666.6L471 666.3L470.5 666.5L470 666.4L469.5 666.4L469 666.4L468.5 666.4L468 666.6L467.5 666.4L467 666.4L466.5 666.4L466 666.4L465.5 666.4L465 666.5L464.5 666.3L464 666.6L463.5 666.3L463 666.6L462.5 667.8L462 666.1L461.5 667.2L461 666.2L460.5 667L460 667.3L459.5 667L459 667.6L458.5 667.6L458 667.7L457.5 667.3L457 666.7L456.5 667.1L456 667.1L455.5 666.4L455 666.9L454.5 666.6L454 666.8L453.5 666.5L453 666.3L452.5 667.1L452 666.8L451.5 666.6L451 666.8L450.5 666.8L450 666.6L449.5 666.4L449 666.5L448.5 666.4L448 666.4L447.5 666.6L447 666.5L446.5 666.6L446 666.4L445.5 666.4L445 666.5L444.5 666.5L444 666.6L443.5 666.6L443 666.5L442.5 666.6L442 666.6L441.5 666.5L441 666.4L440.5 666.5L440 666.5L439.5 666.4L439 666.5L438.5 666.5L438 666.7L437.5 666.9L437 666.5L436.5 666.6L436 667.1L435.5 667.5L435 667.7L434.5 667.6L434 668L433.5 667.1L433 666.5L432.5 667.9L432 667.8L431.5 667.1L431 668L430.5 668L430 666.6L429.5 667.4L429 667.8L428.5 666.6L428 667L427.5 667.2L427 667.1L426.5 667.2L426 666.5L425.5 667.6L425 666.7L424.5 666.1L424 667.1L423.5 666.7L423 666.3L422.5 666.4L422 666.4L421.5 666.6L421 666.4L420.5 666.5L420 666.5L419.5 666.4L419 667.3L418.5 666.5L418 666.4L417.5 666.5L417 666.3L416.5 666.5L416 666.5L415.5 666.5L415 666.5L414.5 666.4L414 666.3L413.5 666.4L413 666.4L412.5 666.4L412 666.6L411.5 666.6L411 666.6L410.5 666.4L410 666.6L409.5 666.4L409 666.4L408.5 666.5L408 666.6L407.5 666.4L407 666.4L406.5 666.4L406 666.4L405.5 666.4L405 666.4L404.5 666.6L404 666.6L403.5 666.5L403 666.3L402.5 666.5L402 666.4L401.5 666.5L401 666.5L400.5 666.5L400 666.4L399.5 666.5L399 666.8L398.5 667L398 667.1L397.5 666.9L397 667.2L396.5 667.8L396 667.2L395.5 667.8L395 667.5L394.5 667.1L394 667L393.5 667.6L393 666.8L392.5 667.5L392 666.6L391.5 667.2L391 666.7L390.5 667.6L390 666.9L389.5 667L389 666.5L388.5 667.6L388 667.7L387.5 667.5L387 668.1L386.5 667.9L386 667.9L385.5 666.7L385 667.8L384.5 667L384 666.6L383.5 666.7L383 667.9L382.5 667.7L382 667.8L381.5 667.3L381 667.4L380.5 667.5L380 666.8L379.5 667.3L379 667.8L378.5 667.6L378 666.6L377.5 667.3L377 667.8L376.5 667.5L376 666.8L375.5 668.1L375 667.9L374.5 668.1L374 667L373.5 668.1L373 666.7L372.5 667.4L372 667.2L371.5 666.5L371 667.4L370.5 666.8L370 667.1L369.5 667.2L369 667.8L368.5 667.4L368 667.5L367.5 667.9L367 666.8L366.5 667.1L366 666.7L365.5 667L365 667L364.5 667.6L364 666.7L363.5 667.1L363 668L362.5 668.1L362 667.7L361.5 667.9L361 668L360.5 667L360 667.3L359.5 667.2L359 666.6L358.5 666.5L358 666.9L357.5 666.3L357 666.7L356.5 666.6L356 666.5L355.5 666.5L355 666.5L354.5 666.6L354 666.4L353.5 666.5L353 666.3L352.5 666.4L352 666.3L351.5 666.5L351 666.4L350.5 666.3L350 666.5L349.5 666.5L349 666.6L348.5 666.4L348 666.5L347.5 667.3L347 666.6L346.5 666.6L346 666.6L345.5 666.4L345 666.4L344.5 667.3L344 666.4L343.5 666.3L343 666.5L342.5 666.6L342 667.3L341.5 666.4L341 666.5L340.5 666.6L340 666.5L339.5 666.6L339 667.3L338.5 666.6L338 666.4L337.5 666.5L337 666.4L336.5 666.4L336 666.4L335.5 666.5L335 666.4L334.5 666.5L334 666.5L333.5 666.3L333 666.4L332.5 666.4L332 667.3L331.5 666.4L331 666.5L330.5 666.4L330 666.4L329.5 666.6L329 666.4L328.5 666.3L328 666.4L327.5 666.5L327 666.4L326.5 666.4L326 666.4L325.5 666.3L325 666.5L324.5 666.5L324 666.5L323.5 666.5L323 668L322.5 666.4L322 667L321.5 667.8L321 667.2L320.5 668.5L320 667.8L319.5 667.5L319 668.2L318.5 667.3L318 667.6L317.5 667.8L317 667.3L316.5 669.1L316 669.4L315.5 668.1L315 667.2L314.5 669L314 668.1L313.5 667.6L313 667.8L312.5 669.5L312 667.8L311.5 667.2L311 668.1L310.5 667.4L310 667.7L309.5 668.9L309 668.3L308.5 668.4L308 667.7L307.5 668.6L307 668L306.5 669.1L306 669.3L305.5 668.3L305 668.7L304.5 668.9L304 667.3L303.5 668.2L303 668.7L302.5 668L302 669.5L301.5 667.8L301 667.8L300.5 669L300 669.7L299.5 667.4L299 667.9L298.5 667.5L298 667.8L297.5 669.1L297 667.5L296.5 669.1L296 667.3L295.5 667.7L295 668.2L294.5 669.2L294 668.9L293.5 667.8L293 669.2L292.5 668.7L292 668.5L291.5 668L291 668L290.5 667.8L290 668.5L289.5 669.5L289 669.2L288.5 668.3L288 668.4L287.5 667.6L287 669.4L286.5 669L286 667.3L285.5 668.6L285 668.4L284.5 669.2L284 669.4L283.5 668.2L283 668.1L282.5 668.4L282 669.7L281.5 671.2L281 670.2L280.5 670.8L280 670.7L279.5 668.9L279 671.8L278.5 671.1L278 668.4L277.5 671.7L277 670.4L276.5 669.2L276 669.3L275.5 671.3L275 669.3L274.5 668.4L274 670.3L273.5 672L273 670.7L272.5 670.8L272 669.4L271.5 670.5L271 670.8L270.5 671.3L270 669.2L269.5 669L269 669.4L268.5 668.6L268 671.9L267.5 668.8L267 671.6L266.5 669.5L266 668.7L265.5 671.6L265 670.7L264.5 672.1L264 668.6L263.5 668.8L263 668L262.5 669.4L262 667.3L261.5 668.3L261 667L260.5 667.6L260 666.3L259.5 666.8L259 667.4L258.5 666.4L258 666.7L257.5 666.3L257 667L256.5 667.4L256 667.6L255.5 667.3L255 667.4L254.5 667.5L254 667.7L253.5 666.4L253 666.8L252.5 666.6L252 667.3L251.5 666.8L251 666.9L250.5 666.4L250 666.7L249.5 667.1L249 667.6L248.5 666.3L248 667.6L247.5 667L247 667.6L246.5 666.9L246 667.5L245.5 667.7L245 667.3L244.5 667.3L244 666.9L243.5 667.1L243 666.5L242.5 666.3L242 666.7L241.5 666.6L241 666.5L240.5 666.8L240 666.9L239.5 666.3L239 667.1L238.5 667.3L238 666.7L237.5 667.6L237 666.5L236.5 666.4L236 666.5L235.5 667.1L235 667.4L234.5 667.2L234 666.7L233.5 667L233 666.8L232.5 666.5L232 666.4L231.5 666.5L231 666.5L230.5 666.5L230 666.4L229.5 666.6L229 666.6L228.5 666.4L228 666.3L227.5 666.6L227 667.3L226.5 666.6L226 666.6L225.5 666.4L225 666.6L224.5 666.5L224 666.6L223.5 666.6L223 666.4L222.5 666.4L222 666.5L221.5 666.3L221 666.5L220.5 666.6L220 666.4L219.5 666.5L219 666.4L218.5 666.5L218 666.6L217.5 666.6L217 666.5L216.5 666.4L216 666.3L215.5 666.4L215 666.8L214.5 666.1L214 666.8L213.5 667.3L213 667L212.5 666.8L212 668.3L211.5 667.4L211 667.2L210.5 668.2L210 666.9L209.5 668.2L209 667.1L208.5 668.1L208 667.4L207.5 667.5L207 667.9L206.5 667L206 666.9L205.5 667.8L205 666.9L204.5 666.7L204 668.1L203.5 667.3L203 666.9L202.5 667.7L202 666.9L201.5 667.8L201 666.8L200.5 666.3L200 667L199.5 666.7L199 666.5L198.5 666.6L198 666.6L197.5 666.5L197 666.6L196.5 666.5L196 666.5L195.5 666.4L195 666.4L194.5 666.6L194 666.5L193.5 666.6L193 666.6L192.5 666.4L192 666.4L191.5 666.6L191 666.6L190.5 666.6L190 666.4L189.5 666.4L189 666.4L188.5 666.6L188 666.5L187.5 666.4L187 666.5L186.5 666.5L186 666.5L185.5 666.6L185 666.5L184.5 666.4L184 666.4L183.5 666.5L183 666.3L182.5 666.4L182 666.5L181.5 666.4L181 666.4L180.5 666.6L180 666.5L179.5 666.5L179 667.3L178.5 666.5L178 666.5L177.5 666.6L177 666.4L176.5 667.3L176 666.6L175.5 666L175 667L174.5 667L174 666.7L173.5 667.4L173 667.3L172.5 666.6L172 667.4L171.5 667.4L171 668.2L170.5 667.9L170 666.7L169.5 667.7L169 667.5L168.5 667.4L168 668.1L167.5 666.7L167 666.9L166.5 667.2L166 667.8L165.5 666.6L165 667.9L164.5 667.7L164 667.2L163.5 667.5L163 667.1L162.5 668.2L162 667.6L161.5 667.2L161 667.4L160.5 666.7L160 667.3L159.5 667.9L159 668.1L158.5 667.3L158 667.9L157.5 668.1L157 668L156.5 667.4L156 667.3L155.5 668.1L155 668L154.5 666.6L154 666.8L153.5 667.3L153 667.3L152.5 668L152 666.6L151.5 667.3L151 667.4L150.5 667.9L150 668.2L149.5 666.7L149 668.3L148.5 666.9L148 666.8L147.5 667.4L147 666.6L146.5 666.7L146 667.7L145.5 667.9L145 666.7L144.5 668.1L144 666.9L143.5 667.7L143 666.8L142.5 667.3L142 666.7L141.5 667.8L141 666.8L140.5 668.3L140 668.6L139.5 667.7L139 669.2L138.5 668L138 669.5L137.5 669.6L137 670.3L136.5 668.6L136 669.5L135.5 669.6L135 668.7L134.5 669.8L134 670.6L133.5 670.2L133 669.2L132.5 668.8L132 668.1L131.5 668.5L131 670.2L130.5 669.2L130 671.2L129.5 669.6L129 669.7L128.5 671.3L128 669.5L127.5 668.3L127 669.8L126.5 670.9L126 669.9L125.5 668.1L125 669.5L124.5 668.2L124 668.8L123.5 669.2L123 668.9L122.5 667.4L122 667.2L121.5 667L121 667.1L120.5 666.7L120 667.1L119.5 666.8L119 666.4L118.5 666.6L118 667.3L117.5 666.4L117 666.4L116.5 666.6L116 666.5L115.5 666.5L115 666.6L114.5 666.5L114 666.6L113.5 666.4L113 666.5L112.5 666.5L112 666.5L111.5 666.6L111 666.5L110.5 666.6L110 666.3L109.5 666.5L109 667.3L108.5 666.4L108 666.4L107.5 666.4L107 666.6L106.5 666.5L106 666.6L105.5 666.4L105 666.6L104.5 666.4L104 666.5L103.5 666.5L103 666.4L102.5 666.5L102 666.6L101.5 666.5L101 666.6L100.5 666.6L100 666.6L99.5 666.5L99 666.4L98.5 666.3L98 666.3L97.5 666.5L97 666.4L96.5 666.4L96 666.3L95.5 666.5L95 666.4L94.5 666.5L94 666.4L93.5 666.5L93 666.4L92.5 666.4L92 666.4L91.5 666.6L91 666.4L90.5 666.4L90 666.4L89.5 666.6L89 666.4L88.5 666.4L88 666.4L87.5 666.5L87 667.3L86.5 666.6L86 666.6L85.5 666.6L85 666.3L84.5 666.6L84 666.4L83.5 666.6L83 666.5L82.5 666.5L82 666.3L81.5 667.3L81 666.5L80.5 667.3L80 666.4L79.5 666.4L79 666.6Z"/></svg>
<div class="txt" style="left:28px;top:676px;font-size:12px;line-height:16px;color:#d0d0d0"><span class="c">音频轨道</span></div>
<div class="abs" style="left:679.6px;top:598px;width:1.5px;height:94.5px;background:#2687c0"></div>
<div class="abs" style="left:109px;top:693px;width:188px;height:2.8px;background:#4a4a4d"></div>


<!-- ===== Right panel ===== -->
<div class="panel" style="left:908px;top:42.4px;width:360.9px;height:665.6px"></div>
<div class="txt" style="left:1005.2px;top:57.4px;font-size:12px;line-height:16px;color:#a8a8a8"><span class="c">轨道</span>1</div>
<div class="abs" style="left:1121px;top:53px;width:66px;height:25px;background:#1f1f21;border-radius:5px"></div>
<div class="txt" style="left:1138.6px;top:57.5px;font-size:12px;line-height:16px;color:#b0b0b0"><span class="c">轨道</span>2</div>
<!-- tiles row1 -->
<div class="tile" style="left:1033px;top:116.8px"></div>
<div class="tile" style="left:1089.2px;top:116.8px"></div>
<div class="tile" style="left:1145.6px;top:116.8px"></div>
<div class="tile" style="left:1202.1px;top:116.8px"></div>
<!-- tiles row2 -->
<div class="tile" style="left:1033px;top:176px;height:47.1px"></div>
<div class="tile" style="left:1089.2px;top:176px;height:47.1px;background:#fff"></div>
<div class="tile" style="left:1145.6px;top:176px;height:47.1px;background:#ffd91e"></div>
<div class="tile" style="left:1202.1px;top:176px;height:47.1px;background:#006aff"></div>
<svg class="abs" style="left:1030px;top:110px;will-change:transform" width="230" height="120" viewBox="1030 110 230 120" font-family="'Liberation Sans',sans-serif" font-weight="700">
<text transform="translate(1055.25,150.70) scale(1.117,1)" text-anchor="middle" font-size="29.94" fill="#000" stroke="#fff" stroke-width="4" stroke-linejoin="miter" paint-order="stroke">T</text>
<text transform="translate(1111.55,150.7) scale(1.135,1)" text-anchor="middle" font-size="29.9" fill="#ffe21c">T</text>
<text transform="translate(1167.9,150.40) scale(1.115,1)" text-anchor="middle" font-size="29.07" fill="#fff" stroke="#0a6cff" stroke-width="4.4" stroke-linejoin="miter" paint-order="stroke">T</text>
<text transform="translate(1224.45,150.40) scale(1.115,1)" text-anchor="middle" font-size="29.07" fill="#fff" stroke="#f40808" stroke-width="4.4" stroke-linejoin="miter" paint-order="stroke">T</text>
<text transform="translate(1055,209.90) scale(1.121,1)" text-anchor="middle" font-size="29.07" fill="#fff">T</text>
<text transform="translate(1111.4,209.90) scale(1.121,1)" text-anchor="middle" font-size="29.07" fill="#000">T</text>
<text transform="translate(1167.9,209.90) scale(1.121,1)" text-anchor="middle" font-size="29.07" fill="#000">T</text>
<text transform="translate(1224.4,209.90) scale(1.121,1)" text-anchor="middle" font-size="29.07" fill="#fff">T</text>
</svg>
<div class="sep" style="left:920px;top:244px;width:335px"></div>
<!-- font select -->
<div class="abs" style="left:920px;top:257.8px;width:276px;height:23.4px;background:#39393c;border:1.3px solid #18181a;border-right-color:#222224;border-bottom-color:#222224"></div>
<div class="txt" style="left:1031px;top:261px;font-size:12px;line-height:16px;color:#b8b8b8"><span class="c">黑体</span></div>
<div class="abs" style="left:1180.5px;top:260px;width:14.2px;height:19.6px;background:#3a3a3d;border-right:1.2px solid #161618;border-bottom:1.2px solid #161618"></div>
<svg class="abs" style="left:1183px;top:266px" width="9" height="6" viewBox="0 0 9 6"><path d="M0.5 0.5h8L4.5 5z" fill="#d8d8d8"/></svg>
<div class="txt" style="left:1202.3px;top:259px;font-family:'Liberation Serif',serif;font-weight:bold;font-size:15px;line-height:18px;color:#d4d4d4;-webkit-text-stroke:.7px #d4d4d4">T</div>
<div class="txt" style="left:1219.4px;top:259px;font-family:'Liberation Serif',serif;font-style:italic;font-weight:bold;font-size:15px;line-height:18px;color:#d8d8d8">T</div>
<div class="txt" style="left:1236.4px;top:259px;font-family:'Liberation Serif',serif;font-weight:bold;font-size:15px;line-height:18px;color:#d4d4d4;text-decoration:underline;text-underline-offset:1.5px">T</div>
<!-- small dropdown -->
<div class="abs" style="left:960px;top:293px;width:105px;height:24px;background:#38383b;border-radius:4px"></div>
<svg class="abs" style="left:1046.7px;top:301px" width="9" height="7" viewBox="0 0 9 7"><path d="M1 1.5l3.5 3.3L8 1.5" fill="none" stroke="#d8d8d8" stroke-width="1.7"/></svg>
<!-- sliders -->
<div class="abs" style="left:920px;top:339.2px;width:231px;height:2px;background:#444448"></div>
<div class="val" style="left:1170px;top:328px">23%</div>
<div class="step" style="left:1225px;top:328px"></div>
<div class="abs" style="left:920px;top:375px;width:226px;height:2px;background:#6a6a70"></div>
<div class="abs" style="left:1141px;top:371px;width:10px;height:10px;border-radius:50%;background:#85858c"></div>
<div class="val" style="left:1170px;top:364px">100%</div>
<div class="step" style="left:1225px;top:364px"></div>
<div class="sep" style="left:920px;top:399.6px;width:335px"></div>
<div class="sep" style="left:920px;top:444px;width:335px"></div>
<div class="sep" style="left:920px;top:489px;width:335px"></div>
<div class="sep" style="left:920px;top:533px;width:335px"></div>
<!-- position buttons -->
<div class="abs" style="left:980px;top:594px;width:68px;height:24px;background:#4a4a4e;border-radius:4px 0 0 4px"></div>
<div class="abs" style="left:1050px;top:594px;width:67px;height:24px;background:#38383b"></div>
<div class="abs" style="left:1118px;top:594px;width:68px;height:24px;background:#38383b;border-radius:0 4px 4px 0"></div>
<div class="txt" style="left:1072.3px;top:598.5px;font-size:12px;line-height:16px;color:#c4c4c4"><span class="c">中部</span></div>
<div class="txt" style="left:1140.3px;top:598.5px;font-size:12px;line-height:16px;color:#c4c4c4"><span class="c">顶部</span></div>
<div class="abs" style="left:920px;top:640.7px;width:231px;height:2.1px;background:#404044"></div>
<div class="abs" style="left:920px;top:640.7px;width:37px;height:2.1px;background:#6a6a70"></div>
<div class="abs" style="left:952px;top:636.7px;width:10px;height:10px;border-radius:50%;background:#85858c"></div>
<div class="val" style="left:1170px;top:630px">15%</div>
<div class="step" style="left:1225px;top:630px"></div>
<div class="sep" style="left:920px;top:665.4px;width:335px;height:1.5px"></div>
<div class="abs" style="left:920px;top:682px;width:11px;height:11px;background:#1c1c1e;border-radius:2px"></div>
<div class="txt" style="left:936.4px;top:680px;font-size:12px;line-height:16px;color:#d0d0d0"><span class="c">应用到所有字幕</span></div>
<svg class="abs" style="left:1023.5px;top:681.2px" width="14" height="14" viewBox="0 0 14 14"><circle cx="7" cy="7" r="5.8" fill="none" stroke="#8a8a8a" stroke-width="1"/><path d="M7 3.8v4.2M7 9.3v1.2" stroke="#8a8a8a" stroke-width="1.1"/></svg>
<!-- scrollbar -->
<div class="abs" style="left:1266.4px;top:52px;width:2px;height:361px;background:#48484b;border-radius:1px"></div>
<svg class="abs" style="left:0;top:0" width="1280" height="720" viewBox="0 0 1280 720"><g fill="none" stroke="#d8d8d8" stroke-width="1.45">
<path d="M1232 336.5l3.7-3.4 3.7 3.4M1232 343.5l3.7 3.4 3.7-3.4"/>
<path d="M1232 372.5l3.7-3.4 3.7 3.4M1232 379.5l3.7 3.4 3.7-3.4"/>
<path d="M1232 637.8l3.7-3.4 3.7 3.4M1232 645.6l3.7 3.4 3.7-3.4"/>
</g></svg>


<!-- ===== Dialog ===== -->
<div class="abs" style="left:240.6px;top:88px;width:800.4px;height:544.6px;background:#0a0a0b;border-radius:9px"></div>
<div class="abs" style="left:241.9px;top:90px;width:798.1px;height:541.8px;background:#58585a;border-radius:8px"></div>
<div class="abs" style="left:243.5px;top:91.7px;width:795px;height:538.2px;background:#1e1e20;border-radius:6.5px"></div>
<div class="logo" style="left:250.1px;top:99.3px;width:23.2px;height:23.2px"></div>
<svg class="abs" style="left:255.1px;top:104.2px;will-change:transform" width="13.1" height="13" viewBox="0 0 13.1 13"><rect x="0" y="1" width="13.1" height="11.2" fill="#fff"/><text x="6.55" y="9.9" text-anchor="middle" font-family="'Liberation Serif',serif" font-weight="700" font-size="9.6" fill="#29abe2" stroke="#29abe2" stroke-width=".45">T</text></svg>
<div class="txt" style="left:283px;top:103px;font-weight:bold;color:#fff;font-size:12px;line-height:16px"><span class="c">字幕翻译</span></div>
<svg class="abs" style="left:1021px;top:105px" width="12" height="12" viewBox="0 0 12 12"><path d="M1 1l10 10M11 1L1 11" stroke="#d8d8d8" stroke-width="1.1"/></svg>
<div class="abs" style="left:250.3px;top:132.3px;width:781px;height:1.8px;background:#0c0c0d"></div>
<div class="btn" style="left:250px;top:143.2px;width:105px;height:25px;line-height:28px"><span class="c">打开字幕文件</span></div>

<div class="box" style="left:250px;width:386px">1
00:01:07,350 --&gt; 00:01:17,900
15<span class="c">年前</span>  <span class="c">一场科学实验出错</span>  <span class="c">导致一群高智商猩猩崛起</span>
<span class="c">人类却因为猿流感病毒濒临灭绝</span>

2
00:01:17,900 --&gt; 00:01:21,370
<span class="c">崛起</span>

3
00:01:22,100 --&gt; 00:01:34,100
<span class="c">以凯撒为首的新猿族建立伊始</span>  <span class="c">幸存的人类力求和平共处</span>
<span class="c">而叛徒科巴给人类带来了一场报复性袭击</span>  <span class="c">和平已逝</span>  <span class="c">人猿大战一触即发</span>

4
00:01:34,100 --&gt; 00:01:37,600
<span class="c">黎明</span>

5
00:01:38,300 --&gt; 00:01:59,600
<span class="c">幸存之人向北部军事基地</span>(<span class="c">仅存的美国国军聚集地</span>)<span class="c">发出紧急求助</span>
<span class="c">另一边冷血的特种部队上校带着他的精英部队执行消灭猩猩的任务</span>
<span class="c">猿族逃亡了近两年</span>  <span class="c">现传闻凯撒在树林深处的秘密基地里筹备着大战</span>
<div class="sb"><div class="thumb"></div><svg class="abs" style="left:2.8px;top:5.6px" width="9" height="6" viewBox="0 0 9 6"><path d="M1 5l3.5-3.5L8 5" fill="none" stroke="#444" stroke-width="1.9"/></svg><svg class="abs" style="left:2.8px;bottom:4.4px" width="9" height="6" viewBox="0 0 9 6"><path d="M1 1l3.5 3.5L8 1" fill="none" stroke="#444" stroke-width="1.9"/></svg></div></div>

<div class="box" style="left:645.6px;width:385.7px">1
00:01:07,350 --&gt; 00:01:17,900
15<span class="c">年前</span>  <span class="c">一场科学实验出错</span>  <span class="c">导致一群高智商猩猩崛起</span>
<span class="c">人类却因为猿流感病毒濒临灭绝</span>
<span class="e">15 years ago, a mistake in a scientific experiment led to the rise</span>
<span class="e">of a group of highly intelligent orangutans</span>
<span class="e">Humans are on the verge of extinction because of the ape</span>
<span class="e">influenza virus</span>

2
00:01:17,900 --&gt; 00:01:21,370
<span class="c">崛起</span>
<span class="e">rise</span>

3
00:01:22,100 --&gt; 00:01:34,100
<span class="c">以凯撒为首的新猿族建立伊始</span>  <span class="c">幸存的人类力求和平共处</span>
<span class="c">而叛徒科巴给人类带来了一场报复性袭击</span>  <span class="c">和平已逝</span>  <span class="c">人猿大战一触即发</span>
<span class="e">At the beginning of the establishment of the new ape race led by</span>
<span class="e">Caesar, the surviving humans strive for peaceful coexistence</span>
<span class="e">The traitor Koba brought a retaliatory attack to mankind. Peace is</span>
<span class="e">dead and the war between man and ape is imminent</span>
<div class="sb" style="width:13.6px;right:2px"><div class="thumb" style="left:.3px;width:12.9px"></div><svg class="abs" style="left:2.8px;top:5.6px" width="9" height="6" viewBox="0 0 9 6"><path d="M1 5l3.5-3.5L8 5" fill="none" stroke="#444" stroke-width="1.9"/></svg><svg class="abs" style="left:2.8px;bottom:4.4px" width="9" height="6" viewBox="0 0 9 6"><path d="M1 1l3.5 3.5L8 1" fill="none" stroke="#444" stroke-width="1.9"/></svg></div></div>

<div class="txt" style="left:484.5px;top:531px;font-size:12px;line-height:16px;color:#b4b4b4"><span class="c">预览框</span></div>
<div class="txt" style="left:763.3px;top:531px;font-size:12px;line-height:16px;color:#b4b4b4"><span class="c">翻译框</span></div>
<div class="txt" style="left:250px;top:563.4px;font-weight:500;color:#fff;font-size:12px;line-height:16px"><span class="c">字幕翻译</span></div>
<div class="abs" style="left:304.8px;top:560.4px;width:70.6px;height:20.6px;background:#e6e6e6;border:1px solid #6a6a6a"></div>
<div class="txt" style="left:309px;top:563px;font-size:12px;line-height:16px;color:#000;-webkit-text-stroke:.25px #000"><span class="c">英文</span></div>
<svg class="abs" style="left:361.8px;top:568.4px" width="9" height="6" viewBox="0 0 9 6"><path d="M0.4 0.4h8.2L4.5 5.2z" fill="#111"/></svg>
<div class="btn" style="left:385px;top:559px;width:105px;height:25px;line-height:27.5px"><span class="c">翻译</span></div>
<div class="abs" style="left:499px;top:564.8px;width:11.5px;height:12px;background:#2ea0e6;border-radius:2px"></div>
<svg class="abs" style="left:499px;top:565px" width="12" height="12" viewBox="0 0 12 12"><path d="M2.4 6.2l2.3 2.3 4.4-5" fill="none" stroke="#fff" stroke-width="1.4"/></svg>
<div class="txt" style="left:516px;top:563px;font-size:12px;line-height:16px;color:#d8d8d8"><span class="c">双语字幕</span></div>
<div class="btn" style="left:927px;top:559px;width:105px;height:25px;line-height:27.5px"><span class="c">保存翻译字幕</span></div>

</body>
</html>
